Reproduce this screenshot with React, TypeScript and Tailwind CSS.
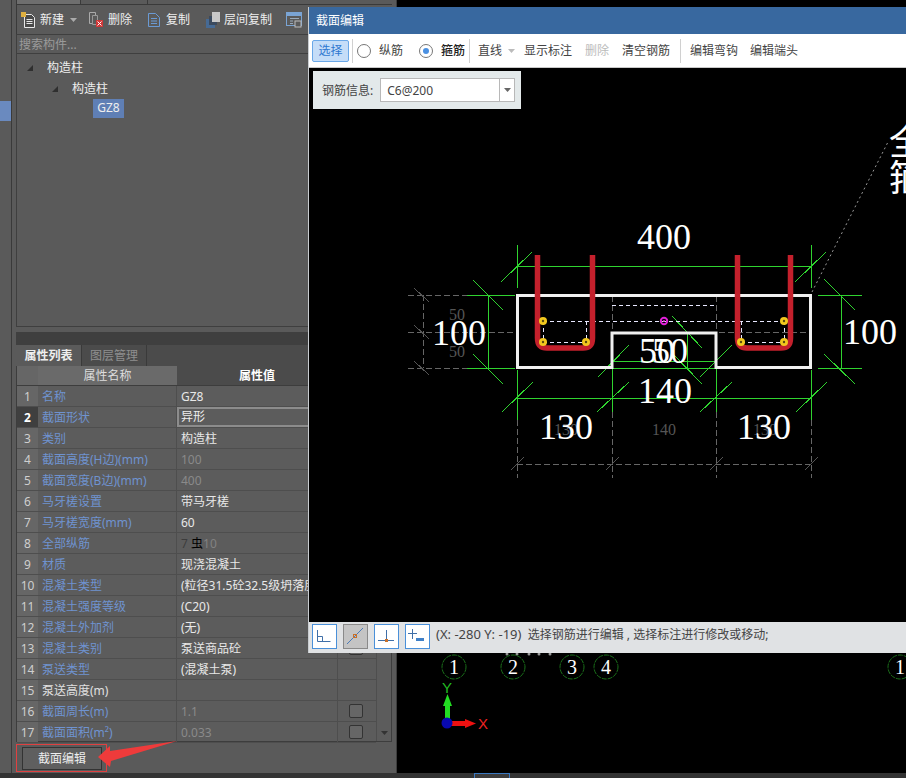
import { ReactNode } from "react";

const rows = [
  { name: "名称", value: "GZ8" },
  { name: "截面形状", value: "异形" },
  { name: "类别", value: "构造柱" },
  { name: "截面高度(H边)(mm)", value: "100", off: true },
  { name: "截面宽度(B边)(mm)", value: "400", off: true },
  { name: "马牙槎设置", value: "带马牙槎" },
  { name: "马牙槎宽度(mm)", value: "60" },
  { name: "全部纵筋", value: "rebar" },
  { name: "材质", value: "现浇混凝土" },
  { name: "混凝土类型", value: "(粒径31.5砼32.5级坍落度" },
  { name: "混凝土强度等级", value: "(C20)" },
  { name: "混凝土外加剂", value: "(无)" },
  { name: "混凝土类别", value: "泵送商品砼", check: true },
  { name: "泵送类型", value: "(混凝土泵)" },
  { name: "泵送高度(m)", value: "", plain: true },
  { name: "截面周长(m)", value: "1.1", off: true, check: true },
  { name: "截面面积(m²)", value: "0.033", off: true, check: true },
];

// [x1, y1, x2, y2] of the green dimension lines
const greenLines = [
  [517, 266, 811, 266], [517, 245, 517, 288], [811, 245, 811, 288], [501, 282, 532, 252], [795, 282, 826, 252],
  [488, 295, 488, 368], [467, 295, 515, 295], [467, 368, 515, 368], [473, 280, 503, 310], [473, 354, 503, 384],
  [841, 295, 841, 368], [818, 295, 862, 295], [818, 368, 862, 368], [824, 279, 855, 310], [824, 354, 855, 384],
  [517, 398, 811, 398], [517, 370, 517, 420], [612, 333, 612, 412], [716, 333, 716, 412], [811, 370, 811, 420],
  [502, 412, 533, 382], [597, 412, 629, 382], [700, 412, 732, 382], [796, 412, 827, 382],
  [612, 361, 716, 361], [598, 377, 629, 345], [700, 377, 732, 345],
  [687, 333, 687, 368], [612, 368, 716, 368], [672, 316, 702, 348], [672, 353, 702, 384],
];

// grey dashed extension lines
const greyLines = [
  [423, 295, 423, 368], [408, 295, 467, 295], [408, 332, 515, 332], [408, 368, 467, 368],
  [517, 464, 811, 464], [517, 420, 517, 478], [612, 412, 612, 478], [716, 412, 716, 478], [811, 420, 811, 478],
  [612, 296, 612, 333], [716, 296, 716, 333], [719, 332, 808, 332],
];

const greyTicks = [
  [414, 288, 429, 302], [414, 325, 429, 339], [414, 361, 429, 375],
  [511, 470, 524, 457], [606, 470, 619, 457], [710, 470, 723, 457], [805, 470, 818, 457],
];

const whiteDashes = [
  [543, 321, 784, 321], [612, 305, 716, 305], [543, 342, 586, 342], [543, 321, 543, 342], [586, 321, 586, 342],
  [741, 342, 784, 342], [741, 321, 741, 342], [784, 321, 784, 342],
];

const yellowDots = [[543, 321], [543, 342], [586, 342], [784, 321], [741, 342], [784, 342]];

const serif = "'Liberation Serif', 'Noto Sans CJK SC', serif";

function Big({ x, y, children }: { x: number; y: number; children: ReactNode }) {
  return (
    <text x={x} y={y} fontFamily={serif} fontSize={36} fill="#fff" textAnchor="middle">
      {children}
    </text>
  );
}

function Small({ x, y, children }: { x: number; y: number; children: ReactNode }) {
  return (
    <text x={x} y={y} fontFamily={serif} fontSize={16} fill="#555" textAnchor="middle">
      {children}
    </text>
  );
}

function Section() {
  return (
    <svg viewBox="309 68 597 554" className="block h-full w-full">
      <g shapeRendering="crispEdges">
        {greyLines.map((l, i) => (
          <line key={i} x1={l[0]} y1={l[1]} x2={l[2]} y2={l[3]} stroke="#666" strokeDasharray="6 3" />
        ))}
        {greyTicks.map((l, i) => (
          <line key={i} x1={l[0]} y1={l[1]} x2={l[2]} y2={l[3]} stroke="#555" />
        ))}
      </g>
      <Small x={457} y={320}>50</Small>
      <Small x={457} y={357}>50</Small>
      <Small x={566} y={435}>130</Small>
      <Small x={664} y={435}>140</Small>
      <Small x={765} y={435}>130</Small>

      <line x1={812} y1={292} x2={888} y2={142} stroke="#999" strokeDasharray="2 3" />
      <g shapeRendering="crispEdges">
        {greenLines.map((l, i) => (
          <line key={i} x1={l[0]} y1={l[1]} x2={l[2]} y2={l[3]} stroke="#2fd32f" />
        ))}
      </g>
      <polygon
        points="517.5,295.5 810.5,295.5 810.5,367.5 716,367.5 716,333 612,333 612,367.5 517.5,367.5"
        fill="none"
        stroke="#f0f0f0"
        strokeWidth={3}
      />
      <g shapeRendering="crispEdges">
        {whiteDashes.map((l, i) => (
          <line key={i} x1={l[0]} y1={l[1]} x2={l[2]} y2={l[3]} stroke="#e8e8ff" strokeDasharray="4 3" />
        ))}
      </g>
      <path d="M537.5 255V338Q537.5 348 547 348H583Q592.5 348 592.5 338V255" fill="none" stroke="#c4202c" strokeWidth={5.5} />
      <path d="M737.5 255V338Q737.5 348 747 348H781Q790.5 348 790.5 338V255" fill="none" stroke="#c4202c" strokeWidth={5.5} />
      {yellowDots.map((d, i) => (
        <g key={i}>
          <circle cx={d[0]} cy={d[1]} r={4} fill="#f2c81e" />
          <circle cx={d[0]} cy={d[1]} r={1.2} fill="#5a4a10" />
        </g>
      ))}
      <circle cx={664} cy={321} r={3.2} fill="none" stroke="#e020d8" strokeWidth={2} />
      <circle cx={664} cy={321} r={1} fill="#e020d8" />

      <Big x={664} y={249}>400</Big>
      <Big x={459} y={345}>100</Big>
      <Big x={870} y={344}>100</Big>
      <Big x={665} y={403}>140</Big>
      <Big x={566} y={439}>130</Big>
      <Big x={764} y={439}>130</Big>
      <Big x={657} y={363}>50</Big>
      <Big x={670} y={363}>50</Big>
      <text x={889} y={155} fontFamily={serif} fontSize={36} fill="#fff">全</text>
      <text x={889} y={191} fontFamily={serif} fontSize={36} fill="#fff">箍</text>
    </svg>
  );
}

function Axes() {
  const marks = [
    [454, "1"], [513, "2"], [572, "3"], [606, "4"], [900, "1"],
  ] as const;
  return (
    <svg viewBox="397 0 509 773" className="block h-full w-full">
      {[507, 517, 529, 539, 550].map((x) => (
        <circle key={x} cx={x} cy={654} r={1.5} fill="#999" />
      ))}
      {marks.map(([x, t], i) => (
        <g key={i}>
          <circle cx={x} cy={667} r={12} fill="none" stroke="#1a6e1a" strokeDasharray="5 1" />
          <text x={x} y={674} fontFamily={serif} fontSize={20} fill="#fff" textAnchor="middle">{t}</text>
        </g>
      ))}
      <rect x={445} y={702} width={5} height={20} fill="#22dd22" />
      <polygon points="447.5,694 452,706 443,706" fill="#22dd22" />
      <rect x={450} y={721} width={18} height={5} fill="#ee1111" />
      <polygon points="476,723.5 465,719 465,728" fill="#ee1111" />
      <circle cx={447} cy={723} r={5.5} fill="#0808b0" />
      <text x={447} y={693} fontFamily="'Liberation Sans', sans-serif" fontSize={15} fill="#22bb22" textAnchor="middle">Y</text>
      <text x={483} y={729} fontFamily="'Liberation Sans', sans-serif" fontSize={15} fill="#ee2222" textAnchor="middle">X</text>
    </svg>
  );
}

function NewIcon() {
  return (
    <svg width="16" height="16" viewBox="0 0 16 16" className="shrink-0">
      <path d="M3.5 2.5h7l3 3v10h-10z" fill="#4a4a4a" stroke="#e8e8e8" />
      <path d="M5.5 7.5h6M5.5 9.5h6M5.5 11.5h6" stroke="#e8e8e8" />
      <rect x="0" y="0" width="5" height="5" fill="#e0b040" />
    </svg>
  );
}

function DeleteIcon() {
  return (
    <svg width="16" height="17" viewBox="0 0 16 17" className="shrink-0">
      <path d="M1.5 1.5h6v11h-6z" fill="none" stroke="#aaa" />
      <path d="M4.5 4.5h5v9h-5z" fill="#5a5a5a" stroke="#999" />
      <rect x="8" y="9" width="7" height="7" fill="#d03838" />
      <path d="M9.5 10.5l4 4M13.5 10.5l-4 4" stroke="#fff" />
    </svg>
  );
}

function CopyIcon() {
  return (
    <svg width="14" height="16" viewBox="0 0 14 16" className="shrink-0">
      <path d="M1.5 1.5h7l4 4v9h-11z" fill="none" stroke="#6a9ad4" />
      <path d="M4 6.5h6M4 9h6M4 11.5h6" stroke="#6a9ad4" />
    </svg>
  );
}

function LayerCopyIcon() {
  return (
    <svg width="15" height="16" viewBox="0 0 15 16" className="shrink-0">
      <rect x="0" y="7" width="9" height="9" fill="#466a94" />
      <rect x="3" y="4" width="8" height="9" fill="#3b4a5e" />
      <rect x="6" y="0" width="8" height="10" fill="#c8c8c8" />
    </svg>
  );
}

function GridIcon() {
  return (
    <svg width="17" height="16" viewBox="0 0 17 16" className="shrink-0">
      <rect x="0.5" y="0.5" width="15" height="13" fill="none" stroke="#7aa4d4" />
      <rect x="1" y="1" width="14" height="3" fill="#7aa4d4" />
      <path d="M4 6.5h9M4 9h3M4 11.5h3" stroke="#9ab" />
      <rect x="9" y="9" width="6" height="6" fill="#5a5a5a" stroke="#bbb" />
    </svg>
  );
}

function ToolButton({ active, children }: { active?: boolean; children: ReactNode }) {
  return (
    <div className={active ? "h-[25px] w-[25px] border border-[#8a8a8a] bg-[#c4c4c4]" : "h-[25px] w-[25px] border border-[#4a90d9] bg-white"}>
      <svg viewBox="0 0 23 23" className="block h-full w-full">
        {children}
      </svg>
    </div>
  );
}

function Radio({ on }: { on?: boolean }) {
  return (
    <span className="flex h-[14px] w-[14px] items-center justify-center rounded-full border border-[#777] bg-white">
      {on && <span className="h-[6px] w-[6px] rounded-full bg-[#4a90e2]" />}
    </span>
  );
}

function Sep() {
  return <span className="block h-[24px] w-px bg-[#d0d0d0]" />;
}

function Caret({ color }: { color: string }) {
  return (
    <svg width="7" height="4" viewBox="0 0 7 4" className="block">
      <polygon points="0,0 7,0 3.5,4" fill={color} />
    </svg>
  );
}

function Dialog() {
  return (
    <div className="absolute left-[308px] top-[7px] flex h-[646px] w-[598px] flex-col border-l border-[#c8ccd0] text-[12px]">
      <div className="flex h-[27px] items-center bg-[#38689f] pl-[7px] text-white">截面编辑</div>
      <div className="flex h-[34px] items-center border-b border-[#c8c8c8] bg-white pl-[3px] text-[#444]">
        <span className="flex h-[22px] w-[37px] items-center justify-center rounded-[2px] border border-[#6aa8e8] bg-[#c5ddf8] text-[#2f78d0]">选择</span>
        <span className="ml-[3px]"><Sep /></span>
        <span className="ml-[4px]"><Radio /></span>
        <span className="ml-[8px]">纵筋</span>
        <span className="ml-[16px]"><Radio on /></span>
        <span className="ml-[8px] font-medium text-[#222]">箍筋</span>
        <span className="ml-[4px]"><Sep /></span>
        <span className="ml-[8px]">直线</span>
        <span className="ml-[6px]"><Caret color="#bbb" /></span>
        <span className="ml-[9px]">显示标注</span>
        <span className="ml-[13px] text-[#bbb]">删除</span>
        <span className="ml-[13px]">清空钢筋</span>
        <span className="ml-[10px]"><Sep /></span>
        <span className="ml-[9px]">编辑弯钩</span>
        <span className="ml-[12px]">编辑端头</span>
      </div>
      <div className="relative flex-1 bg-black">
        <Section />
        <div className="absolute left-[4px] top-[3px] flex h-[38px] w-[208px] items-center bg-[#e3e9ea] pl-[9px] text-[#444]">
          <span className="pt-px">钢筋信息:</span>
          <div className="ml-[7px] flex h-[24px] w-[135px] items-center border border-[#b8b8b8] bg-white">
            <span className="flex-1 pl-[6px] pt-[2px] text-[#444]">C6@200</span>
            <span className="flex h-full w-[15px] items-center justify-center border-l border-[#b8b8b8]"><Caret color="#666" /></span>
          </div>
        </div>
      </div>
      <div className="flex h-[31px] items-start gap-[6px] bg-[#e0e2e4] pl-[3px] pt-[2px] text-[#444]">
        <ToolButton>
          <path d="M4.5 5v11.5h13M4.5 11.5h5v5" fill="none" stroke="#3f6fa8" />
        </ToolButton>
        <ToolButton active>
          <path d="M3 19L19 3" stroke="#4a7ab8" />
          <rect x="9.5" y="9.5" width="3" height="3" fill="none" stroke="#c8702a" />
        </ToolButton>
        <ToolButton>
          <path d="M11.5 5v12M3 15.5h16" stroke="#3f6fa8" />
          <rect x="10" y="14" width="3" height="3" fill="#c8702a" />
        </ToolButton>
        <ToolButton>
          <path d="M6.5 4v10M2 8.5h9" stroke="#3f6fa8" />
          <rect x="10" y="13" width="8" height="3" fill="#3f80c8" />
        </ToolButton>
        <span className="mt-[1px] whitespace-pre"><span className="text-[13px]">(X: -280 Y: -19)</span>{"  选择钢筋进行编辑 , 选择标注进行修改或移动;"}</span>
      </div>
    </div>
  );
}

function PropertyTable() {
  return (
    <div className="flex h-[376px] border-b border-l border-r border-[#3d3d3d] bg-[#5c5c5c] text-[12px]">
      <div className="flex-1">
        <div className="grid h-[20px] grid-cols-[21px_139px_160px_39px] border-b border-[#3d3d3d]">
          <div className="bg-[#666]" />
          <div className="flex items-center justify-center bg-[#6a6a6a] pt-px text-[#ddd]">属性名称</div>
          <div className="flex items-center justify-center bg-[#4b4b4b] pt-px font-bold text-white">属性值</div>
          <div className="bg-[#4b4b4b]" />
        </div>
        {rows.map((r, i) => (
          <div key={r.name} className="grid h-[21px] grid-cols-[21px_139px_160px_39px] border-b border-[#4e4e4e]">
            <div className={i === 1 ? "flex items-center justify-center bg-[#3f3f3f] pt-px font-bold text-white" : "flex items-center justify-center bg-[#666] pt-px text-[#cfcfcf]"}>
              {i + 1}
            </div>
            <div className={r.plain ? "flex items-center border-r border-[#4e4e4e] pl-[4px] pt-px text-[#e0e0e0]" : "flex items-center border-r border-[#4e4e4e] pl-[4px] pt-px text-[#6f93d0]"}>
              {r.name}
            </div>
            <div className={i === 1 ? "flex items-center overflow-hidden whitespace-nowrap border-2 border-[#8c8c8c] pl-[2px] text-[#eee]" : r.off ? "flex items-center overflow-hidden whitespace-nowrap pl-[4px] pt-px text-[#8a8a8a]" : "flex items-center overflow-hidden whitespace-nowrap pl-[4px] pt-px text-[#e8e8e8]"}>
              {r.value === "rebar" ? (
                <span className="text-[#828282]"><span className="text-[#3c3c3c]">7</span> <span className="text-black">虫</span>10</span>
              ) : (
                r.value
              )}
            </div>
            <div className="flex items-center justify-center border-l border-[#4e4e4e] pr-[3px]">
              {r.check && <span className="h-[14px] w-[14px] rounded-[2px] border border-[#333] bg-[#666]" />}
            </div>
          </div>
        ))}
      </div>
      <div className="flex w-[15px] items-end justify-center border-l border-[#4e4e4e] pb-[6px]">
        <Caret color="#333" />
      </div>
    </div>
  );
}

function LeftPanel() {
  return (
    <div className="flex w-[385px] flex-col border-r border-[#3d3d3d] bg-[#5a5a5a] pl-[4px] pr-[4px] text-[12px] text-[#eee]">
      <div className="flex h-[5px] border-b border-l border-[#3a3a3a]">
        <div className="w-[64px] border-r border-[#3a3a3a] bg-[#6e6e6e]" />
        <div className="ml-[66px] w-px bg-[#3a3a3a]" />
      </div>
      <div className="flex h-[29px] items-center border-l border-[#3a3a3a] pl-[4px]">
        <NewIcon />
        <span className="ml-[3px]">新建</span>
        <span className="ml-[6px]"><Caret color="#aaa" /></span>
        <span className="ml-[11px]"><DeleteIcon /></span>
        <span className="ml-[4px]">删除</span>
        <span className="ml-[15px]"><CopyIcon /></span>
        <span className="ml-[5px]">复制</span>
        <span className="ml-[16px]"><LayerCopyIcon /></span>
        <span className="ml-[3px]">层间复制</span>
        <span className="ml-[14px]"><GridIcon /></span>
      </div>
      <div className="flex h-[20px] items-center border-y border-l border-[#3f3f3f] pl-[2px] pt-px text-[#9a9a9a]">搜索构件...</div>
      <div className="flex h-[273px] flex-col border-b border-l border-r border-[#3f3f3f] pt-[3px]">
        <div className="flex h-[21px] items-center">
          <svg width="6" height="6" viewBox="0 0 6 6" className="ml-[10px]"><polygon points="6,0 6,6 0,6" fill="#2f2f2f" /></svg>
          <span className="ml-[14px]">构造柱</span>
        </div>
        <div className="flex h-[21px] items-center">
          <svg width="6" height="6" viewBox="0 0 6 6" className="ml-[35px]"><polygon points="6,0 6,6 0,6" fill="#2f2f2f" /></svg>
          <span className="ml-[14px]">构造柱</span>
        </div>
        <div className="ml-[76px] flex h-[19px] w-[31px] items-center justify-center self-start bg-[#5f7fb5] pb-px">GZ8</div>
      </div>
      <div className="h-[5px]" />
      <div className="h-[13px] bg-[#3f3f3f]" />
      <div className="flex h-[21px] bg-[#4b4b4b]">
        <div className="flex w-[65px] items-center justify-center bg-[#5a5a5a] font-bold text-[#eee]">属性列表</div>
        <div className="flex w-[66px] items-center justify-center border-x border-[#3a3a3a] text-[#8f8f8f]">图层管理</div>
      </div>
      <PropertyTable />
      <div className="flex h-[31px] items-start">
        <div className="mt-[2px] h-[28px] w-[91px] border border-[#e04040] pl-[5px] pt-[2px]">
          <button className="h-[23px] w-[80px] border border-[#333] bg-[#5f5f5f] text-[#eee]">截面编辑</button>
        </div>
      </div>
    </div>
  );
}

export default function App() {
  return (
    <div className="relative flex h-[778px] w-[906px] flex-col overflow-hidden bg-black font-['Noto_Sans','Noto_Sans_CJK_SC',sans-serif]">
      <div className="flex h-[773px]">
        <div className="w-[12px] border-r border-[#3a3a3a] bg-[#5a5a5a] pt-[101px]">
          <div className="h-[20px] bg-[#6a8abf]" />
        </div>
        <LeftPanel />
        <div className="flex-1"><Axes /></div>
      </div>
      <div className="flex h-[5px] bg-[#333]">
        <div className="ml-[474px] h-full w-[36px] border-x border-t border-[#3a78c0] bg-[#3c3c3c]" />
      </div>
      <Dialog />
      <svg className="absolute left-0 top-0 h-[778px] w-[906px]" viewBox="0 0 906 778" pointerEvents="none">
        <polygon points="98,757 110,746 110,751 177,741 111,761 110,767" fill="#ef3b3b" />
      </svg>
    </div>
  );
}
